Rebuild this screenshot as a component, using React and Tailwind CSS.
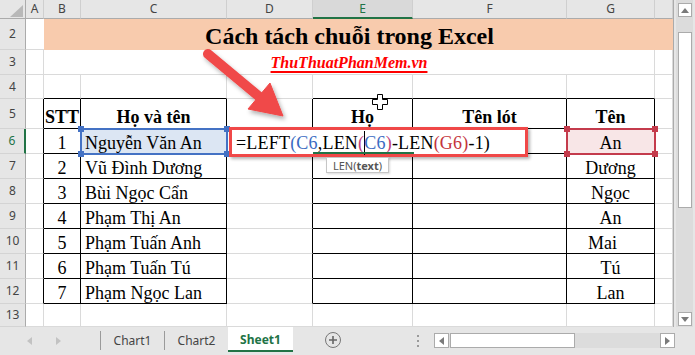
import React from "react";
import clsx from "clsx";

const COLS = ["A", "B", "C", "D", "E", "F", "G", "H"];
const TABLE_COLS = ["B", "C", "E", "F", "G"];

const people = [
  ["1", "Nguyễn Văn An", "An"],
  ["2", "Vũ Đình Dương", "Dương"],
  ["3", "Bùi Ngọc Cẩn", "Ngọc"],
  ["4", "Phạm Thị An", "An"],
  ["5", "Phạm Tuấn Anh", "Mai"],
  ["6", "Phạm Tuấn Tú", "Tú"],
  ["7", "Phạm Ngọc Lan", "Lan"],
];

// grid line colours depend on whether the edge belongs to the bordered table
const Cell = ({ r, c, children, className = "" }) => {
  const inTable = r >= 5 && r <= 12;
  const blackR = inTable && c !== "H";
  const blackB = r >= 4 && r <= 12 && TABLE_COLS.includes(c);
  return (
    <div
      className={clsx(
        "flex items-end whitespace-nowrap border-r border-b",
        blackR ? "border-r-black" : "border-r-[#dadada]",
        blackB ? "border-b-black" : "border-b-[#dadada]",
        className
      )}
    >
      {children}
    </div>
  );
};

const RowHead = ({ n, active }) => (
  <div
    className={clsx(
      "flex items-center justify-center border-b border-b-[#d4d4d4] bg-[#e6e6e6] text-[12px]",
      active
        ? "border-r-2 border-r-[#217346] text-[#217346] bg-[#d9d9d9]"
        : "border-r border-r-[#ababab] text-[#444]"
    )}
  >
    {n}
  </div>
);

const Handles = ({ color }) => (
  <>
    <span className={clsx("absolute -left-[4px] -top-[4px] h-[6px] w-[6px]", color)} />
    <span className={clsx("absolute -right-[4px] -top-[4px] h-[6px] w-[6px]", color)} />
    <span className={clsx("absolute -left-[4px] -bottom-[4px] h-[6px] w-[6px]", color)} />
    <span className={clsx("absolute -right-[4px] -bottom-[4px] h-[6px] w-[6px]", color)} />
  </>
);

const Sheet = () => {
  const rows = [];
  for (let r = 2; r <= 13; r++) {
    rows.push(<RowHead key={"h" + r} n={r} active={r === 6} />);
    if (r === 2) {
      rows.push(<div key="a2" className="border-b border-b-[#dadada]" />);
      rows.push(
        <div key="title" className="col-span-7 bg-[#f8cbad]">
          <div className="flex h-full w-[611px] items-center justify-center pt-[2px] font-['Liberation_Serif',serif] text-[24px] font-bold text-black">
            Cách tách chuỗi trong Excel
          </div>
        </div>
      );
      continue;
    }
    if (r === 3) {
      rows.push(<Cell key="a3" r={r} c="A" />);
      rows.push(
        <div
          key="sub"
          className="col-span-6 flex items-center justify-center border-r border-b border-[#dadada] pt-[1px]"
        >
          <span className="font-['Liberation_Serif',serif] text-[16px] font-bold italic text-[#ff0000] underline decoration-[2px] underline-offset-[3px]">
            ThuThuatPhanMem.vn
          </span>
        </div>
      );
      rows.push(<Cell key="h3" r={r} c="H" />);
      continue;
    }
    COLS.forEach((c) => {
      let content = null;
      let cls = "";
      if (r === 5) {
        cls = "justify-center font-bold pb-[1px]";
        if (c === "B") content = "STT";
        if (c === "C") content = "Họ và tên";
        if (c === "E") content = "Họ";
        if (c === "F") content = "Tên lót";
        if (c === "G") content = "Tên";
      } else if (r >= 6 && r <= 12) {
        const p = people[r - 6];
        if (c === "B") {
          content = p[0];
          cls = "justify-center";
        }
        if (c === "C") {
          content = p[1];
          cls = clsx("pl-[4px]", r === 6 && "bg-[#dce6f3]");
        }
        if (c === "G") {
          content = p[2];
          cls = clsx("justify-center", r === 10 && "pr-[16px]", r === 6 && "bg-[#f8e6e7]");
        }
      }
      rows.push(
        <Cell
          key={c + r}
          r={r}
          c={c}
          className={clsx("font-['Liberation_Serif',serif] text-[18px] leading-[20px] text-black", cls)}
        >
          {content}
        </Cell>
      );
    });
  }

  return (
    <div className="relative h-[327px] w-[673px] bg-white">
      <div className="grid h-full grid-cols-[26px_18px_37px_146px_86px_100px_154px_88px_18px] grid-rows-[19px_31px_25px_24px_30px_repeat(7,25px)_23px]">
        <div className="relative border-r border-b border-r-[#ababab] border-b-[#ababab] bg-[#e6e6e6]">
          <svg className="absolute left-[10px] top-[5px]" width="13" height="12" viewBox="0 0 13 12">
            <polygon points="13,0 13,12 0,12" fill="#b8b8b8" />
          </svg>
        </div>
        {COLS.map((c) => (
          <div
            key={c}
            className={clsx(
              "flex items-center justify-center border-r border-r-[#cfcfcf] font-['Noto_Sans',sans-serif] text-[12px]",
              c === "E"
                ? "border-b-2 border-b-[#217346] bg-[#d9d9d9] text-[#217346]"
                : "border-b border-b-[#ababab] bg-[#e6e6e6] text-[#444]"
            )}
          >
            {c === "H" ? "" : c}
          </div>
        ))}
        {rows}
      </div>

      {/* red arrow annotation */}
      <svg className="pointer-events-none absolute left-0 top-0" width="673" height="327">
        <defs>
          <filter id="sh" x="-20%" y="-20%" width="140%" height="140%">
            <feDropShadow dx="2" dy="3" stdDeviation="2" floodColor="#000" floodOpacity="0.3" />
          </filter>
        </defs>
        <g filter="url(#sh)" fill="#f04848" stroke="#f04848">
          <line x1="208" y1="54" x2="262" y2="99" strokeWidth="10" strokeLinecap="round" />
          <polygon points="283,116 248,109 270,83" strokeWidth="1" strokeLinejoin="round" />
        </g>
      </svg>

      {/* C6 reference highlight */}
      <div className="pointer-events-none absolute left-[80px] top-[128px] h-[27px] w-[148px] border-2 border-[#4472c4]">
        <Handles color="bg-[#4472c4]" />
      </div>

      {/* G6 reference highlight */}
      <div className="pointer-events-none absolute left-[566px] top-[128px] h-[27px] w-[90px] border-2 border-[#c43b4c]">
        <Handles color="bg-[#c43b4c]" />
      </div>

      {/* formula being typed in E6 */}
      <div className="absolute left-[229px] top-[127px] flex h-[30px] w-[299px] items-center border-[3px] border-[#f04848] bg-white pl-[4px] pt-[1px] shadow-[2px_2px_3px_rgba(0,0,0,0.3)] font-['Liberation_Serif',serif] text-[18px] leading-[20px] tracking-[0.2px] text-black">
        <span>=LEFT</span>
        <span className="text-[#3a6bc2]">(C6</span>
        <span>,LEN</span>
        <span className="text-[#c0407a]">(</span>
        <span className="mx-[-0.5px] inline-block h-[24px] w-px bg-black" />
        <span className="text-[#3a6bc2]">C6</span>
        <span className="text-[#c0407a]">)</span>
        <span>-LEN</span>
        <span className="text-[#c4343c]">(G6)</span>
        <span>-1)</span>
        <span className="absolute left-[81px] top-[22px] h-[2px] w-[101px] bg-[#217346]" />
      </div>

      {/* function tooltip */}
      <div className="absolute left-[326px] top-[157px] flex h-[16px] w-[63px] items-center justify-center border border-[#c6c6c6] bg-white font-['Noto_Sans',sans-serif] text-[11px] leading-none text-[#555] shadow-[1px_1px_2px_rgba(0,0,0,0.15)]">
        LEN(<span className="font-bold">text</span>)
      </div>

      {/* mouse cursor */}
      <svg className="pointer-events-none absolute left-[372px] top-[94px]" width="16" height="16" viewBox="0 0 16 16">
        <polygon
          points="5.5,0.5 10.5,0.5 10.5,5.5 15.5,5.5 15.5,10.5 10.5,10.5 10.5,15.5 5.5,15.5 5.5,10.5 0.5,10.5 0.5,5.5 5.5,5.5"
          fill="#fff"
          stroke="#000"
          strokeWidth="1"
        />
      </svg>
    </div>
  );
};

const VScroll = () => (
  <div className="flex h-[327px] w-[22px] border-l border-l-[#ababab] bg-[#e6e6e6] pl-[2px]">
    <div className="flex w-[17px] flex-col items-center bg-[#dcdcdc]">
      <div className="mt-[3px] flex h-[14px] w-[14px] items-center justify-center border border-[#ababab] bg-white">
        <svg width="8" height="5" viewBox="0 0 8 5">
          <polygon points="4,0 8,5 0,5" fill="#7a7a7a" />
        </svg>
      </div>
      <div className="mt-[15px] h-[176px] w-[14px] border border-[#ababab] bg-white" />
      <div className="flex-1" />
      <div className="mb-[1px] flex h-[14px] w-[14px] items-center justify-center border border-[#ababab] bg-white">
        <svg width="8" height="5" viewBox="0 0 8 5">
          <polygon points="0,0 8,0 4,5" fill="#7a7a7a" />
        </svg>
      </div>
    </div>
  </div>
);

const TabBar = () => (
  <div className="flex h-[28px] items-start bg-[#e6e6e6] font-['Noto_Sans',sans-serif] text-[12px] text-[#444]">
    <div className="flex h-[27px] w-[100px] items-center pl-[27px]">
      <svg width="5" height="8" viewBox="0 0 5 8">
        <polygon points="5,0 5,8 0,4" fill="#c2c2c2" />
      </svg>
      <svg className="ml-[24px]" width="5" height="8" viewBox="0 0 5 8">
        <polygon points="0,0 5,4 0,8" fill="#c2c2c2" />
      </svg>
    </div>
    <div className="mt-[4px] h-[19px] w-px bg-[#9a9a9a]" />
    <div className="flex h-[25px] w-[63px] items-center justify-center pt-[2px]">Chart1</div>
    <div className="mt-[4px] h-[19px] w-px bg-[#9a9a9a]" />
    <div className="flex h-[25px] w-[63px] items-center justify-center pt-[2px]">Chart2</div>
    <div className="flex h-[25px] w-[65px] items-center justify-center border-b-2 border-b-[#217346] bg-white pt-[2px] font-bold text-[#217346]">
      Sheet1
    </div>
    <div className="ml-[32px] mt-[5px] flex h-[16px] w-[16px] items-center justify-center rounded-full border-[1.5px] border-[#777]">
      <svg width="10" height="10" viewBox="0 0 10 10">
        <path d="M5 1v8M1 5h8" stroke="#666" strokeWidth="1.6" />
      </svg>
    </div>
    <div className="ml-[76px] mt-[8px] flex h-[12px] w-[2px] flex-col justify-between">
      <span className="h-[2px] w-[2px] bg-[#9a9a9a]" />
      <span className="h-[2px] w-[2px] bg-[#9a9a9a]" />
      <span className="h-[2px] w-[2px] bg-[#9a9a9a]" />
    </div>
    <div className="ml-[15px] mt-[6px] flex h-[15px] w-[241px] bg-[#dcdcdc]">
      <div className="flex h-full w-[15px] items-center justify-center border border-[#ababab] bg-white">
        <svg width="5" height="8" viewBox="0 0 5 8">
          <polygon points="5,0 5,8 0,4" fill="#7a7a7a" />
        </svg>
      </div>
      <div className="ml-px h-full w-[125px] border border-[#ababab] bg-white" />
      <div className="flex-1" />
      <div className="flex h-full w-[15px] items-center justify-center border border-[#ababab] bg-white">
        <svg width="5" height="8" viewBox="0 0 5 8">
          <polygon points="0,0 5,4 0,8" fill="#7a7a7a" />
        </svg>
      </div>
    </div>
  </div>
);

export default function App() {
  return (
    <div className="flex h-[355px] w-[695px] flex-col overflow-hidden bg-[#e6e6e6]">
      <div className="flex h-[327px]">
        <Sheet />
        <VScroll />
      </div>
      <TabBar />
    </div>
  );
}
